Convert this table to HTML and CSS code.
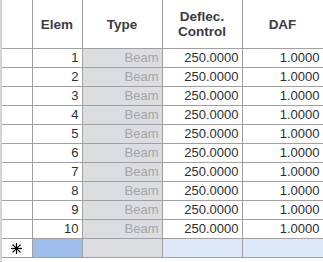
FILE: index.html
```html
<!DOCTYPE html>
<html>
<head>
<meta charset="utf-8">
<link rel="stylesheet" href="styles.css">
</head>
<body>
<div class="grid">
<table class="tbl">
<colgroup>
<col class="c-rh"><col class="c-elem"><col class="c-type"><col class="c-defl"><col class="c-daf">
</colgroup>
<thead>
<tr>
<th class="rh"></th>
<th>Elem</th>
<th>Type</th>
<th>Deflec.<br>Control</th>
<th>DAF</th>
</tr>
</thead>
<tbody>
<tr><td class="rh"></td><td>1</td><td class="type">Beam</td><td>250.0000</td><td>1.0000</td></tr>
<tr><td class="rh"></td><td>2</td><td class="type">Beam</td><td>250.0000</td><td>1.0000</td></tr>
<tr><td class="rh"></td><td>3</td><td class="type">Beam</td><td>250.0000</td><td>1.0000</td></tr>
<tr><td class="rh"></td><td>4</td><td class="type">Beam</td><td>250.0000</td><td>1.0000</td></tr>
<tr><td class="rh"></td><td>5</td><td class="type">Beam</td><td>250.0000</td><td>1.0000</td></tr>
<tr><td class="rh"></td><td>6</td><td class="type">Beam</td><td>250.0000</td><td>1.0000</td></tr>
<tr><td class="rh"></td><td>7</td><td class="type">Beam</td><td>250.0000</td><td>1.0000</td></tr>
<tr><td class="rh"></td><td>8</td><td class="type">Beam</td><td>250.0000</td><td>1.0000</td></tr>
<tr><td class="rh"></td><td>9</td><td class="type">Beam</td><td>250.0000</td><td>1.0000</td></tr>
<tr><td class="rh"></td><td>10</td><td class="type">Beam</td><td>250.0000</td><td>1.0000</td></tr>
<tr class="newrow"><td class="rh star"><svg class="star-icon" width="11" height="11" viewBox="0 0 11 11"><g stroke="#000" stroke-width="1.2" stroke-linecap="square"><line x1="5.5" y1="0.5" x2="5.5" y2="10.5"/><line x1="0.5" y1="5.5" x2="10.5" y2="5.5"/><line x1="2" y1="2" x2="9" y2="9"/><line x1="9" y1="2" x2="2" y2="9"/></g></svg></td><td class="sel"></td><td class="type"></td><td class="nb"></td><td class="nb"></td></tr>
</tbody>
</table>
</div>
</body>
</html>
```
FILE: styles.css
```css
html, body {
  margin: 0;
  padding: 0;
  background: #ffffff;
}
.grid {
  width: 323px;
  height: 262px;
  box-sizing: border-box;
  border-left: 2px solid #d4d4d4;
  overflow: hidden;
}
.tbl {
  border-collapse: collapse;
  table-layout: fixed;
  width: 321px;
  font-family: "Liberation Sans", Arial, sans-serif;
  font-size: 13px;
  color: #2e2e2e;
}
.c-rh { width: 30px; }
.c-elem { width: 50px; }
.c-type { width: 80px; }
.c-defl { width: 80px; }
.c-daf { width: 81px; }
.tbl th, .tbl td {
  border-right: 1px solid #a0a0a4;
  border-bottom: 1px solid #a0a0a4;
  padding: 0 4px 0 0;
  overflow: hidden;
  white-space: nowrap;
}
.tbl th {
  height: 48px;
  font-weight: bold;
  font-size: 13.5px;
  text-align: center;
  vertical-align: middle;
  line-height: 15px;
  color: #3c3c44;
  padding: 0;
}
.tbl td {
  height: 18px;
  line-height: 18px;
  text-align: right;
  padding-right: 3px;
}
.tbl td.type {
  background: #dcdde0;
  color: #a4a4a8;
}
.tbl td.rh {
  padding: 0;
  text-align: center;
}
.tbl td.star {
  line-height: 0;
  vertical-align: middle;
}
.star-icon {
  display: inline-block;
}
.tbl td.sel {
  background: #9ebdea;
}
.tbl td.nb {
  background: #dde8f8;
}
```
